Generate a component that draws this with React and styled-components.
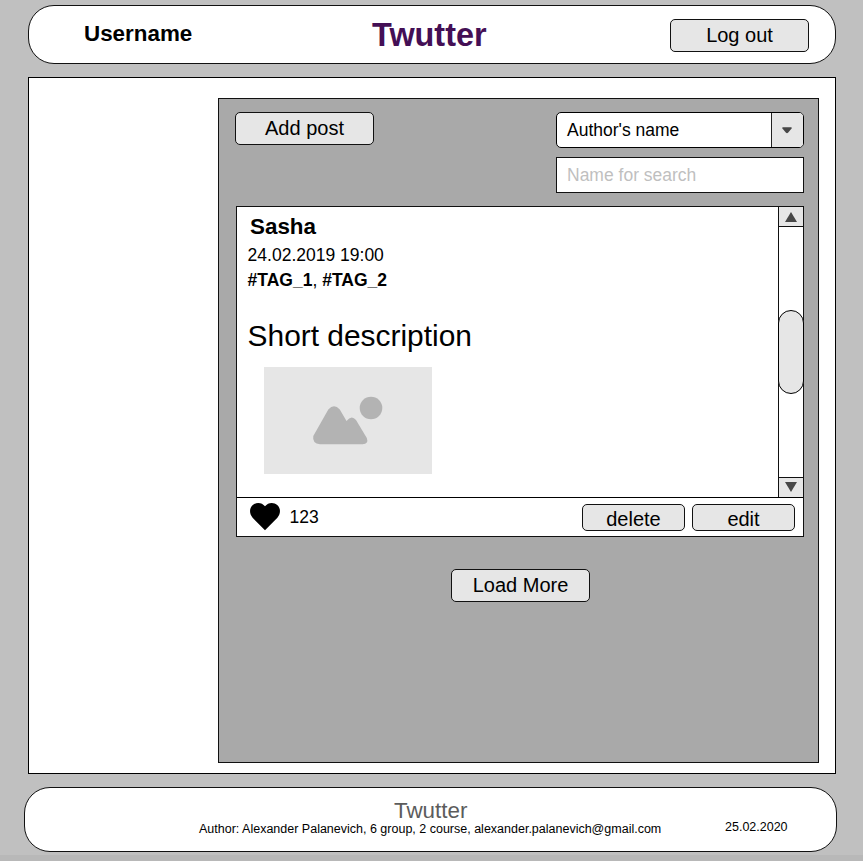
import React from "react";
import styled, { createGlobalStyle } from "styled-components";

const GlobalStyle = createGlobalStyle`
  *, *::before, *::after { box-sizing: border-box; }
  body {
    margin: 0;
    background: #c0c0c0;
    color: #000;
    font-family: "Liberation Sans", Arial, sans-serif;
    overflow: hidden;
  }
  button, input { font-family: inherit; color: inherit; margin: 0; }
`;

const Page = styled.div`
  height: 861px;
  padding: 5px 26px 0 24px;
  display: flex;
  flex-direction: column;
  border-bottom: 6px solid #b8b8b8;
`;

const Header = styled.header`
  margin: 0 1px 0 4px;
  height: 59px;
  flex: none;
  display: grid;
  grid-template-columns: 343px 298px 139px;
  border: 1px solid #111;
  border-radius: 26px;
  background: #fff;
`;

const Username = styled.div`
  padding: 15px 0 0 55px;
  font-size: 22.4px;
  line-height: 26px;
  font-weight: bold;
`;

const Brand = styled.h1`
  margin: 0;
  padding-top: 9px;
  font-size: 32.4px;
  line-height: 40px;
  color: #440f55;
`;

const Button = styled.button`
  width: ${(p) => (p.$small ? 103 : 139)}px;
  height: ${(p) => (p.$small ? 27 : p.$tall ? 33 : 32.5)}px;
  flex: none;
  padding: ${(p) => (p.$small ? "2px 0 0" : "0 0 1px")};
  border: 1px solid #111;
  border-radius: 5px;
  background: #e6e6e6;
  font-size: 20px;
  line-height: 24px;
`;

const LogoutSlot = styled.div`
  padding-top: 13px;
`;

const Main = styled.main`
  margin: 13px 1px 0 4px;
  height: 697px;
  flex: none;
  display: flex;
  justify-content: flex-end;
  padding: 20px 16px 0 0;
  border: 1px solid #000;
  background: #fff;
`;

const Panel = styled.section`
  width: 601px;
  height: 665px;
  display: flex;
  flex-direction: column;
  padding: 13px 14px 0 17px;
  border: 1px solid #111;
  background: #a9a9a9;
`;

const Toolbar = styled.div`
  display: flex;
  justify-content: space-between;
  height: 94px;
  margin-left: -1px;
`;

const Filters = styled.div`
  width: 248px;
  display: flex;
  flex-direction: column;
  gap: 9px;
`;

const Select = styled.div`
  height: 36px;
  display: flex;
  border: 1px solid #000;
  border-radius: 5px;
  background: #fff;
  overflow: hidden;
`;

const SelectValue = styled.div`
  flex: 1;
  padding: 0 0 0 10px;
  font-size: 17.5px;
  line-height: 35px;
`;

const SelectArrow = styled.div`
  width: 32px;
  padding-right: 1px;
  border-left: 1px solid #222;
  background: #e6e6e6;
  display: grid;
  place-items: center;
`;

const Search = styled.input`
  height: 36px;
  width: 100%;
  padding: 0 10px;
  border: 1px solid #111;
  border-radius: 0;
  background: #fff;
  font-size: 17.5px;
  &::placeholder { color: #bfbfbf; opacity: 1; }
`;

const Card = styled.article`
  width: 568px;
  height: 331px;
  flex: none;
  display: flex;
  flex-direction: column;
  border: 1px solid #111;
  background: #fff;
`;

const PostBody = styled.div`
  height: 291px;
  flex: none;
  display: flex;
  border-bottom: 1px solid #000;
`;

const PostContent = styled.div`
  flex: 1;
  padding: 7px 0 0 11px;
`;

const Author = styled.div`
  padding-left: 2px;
  font-size: 22.4px;
  line-height: 26px;
  font-weight: bold;
`;

const Meta = styled.div`
  font-size: 17.5px;
  line-height: 20px;
  margin-top: ${(p) => p.$gap}px;
  margin-left: -0.4px;
`;

const Description = styled.div`
  margin: 28px 0 0 -0.4px;
  font-size: 29.9px;
  line-height: 36px;
`;

const Thumbnail = styled.div`
  width: 167.5px;
  height: 107px;
  margin: 13px 0 0 16px;
  background: #e6e6e6;
  svg { display: block; }
`;

const Scrollbar = styled.div`
  width: 26px;
  margin-right: -1px;
  display: flex;
  flex-direction: column;
  border: solid #111;
  border-width: 0 1px;
`;

const ScrollButton = styled.div`
  height: 20px;
  flex: none;
  display: grid;
  place-items: center;
  background: #e6e6e6;
  border: 0 solid #111;
  border-width: ${(p) => (p.$down ? "1px 0 0" : "0 0 1px")};
  svg { margin: ${(p) => (p.$down ? "0 1px 2px 0" : "0 1px 0 0")}; }
`;

const Track = styled.div`
  flex: 1;
  padding-top: 83px;
`;

const Thumb = styled.div`
  height: 84px;
  margin: 0 -1px;
  border: 1px solid #000;
  border-radius: 13px;
  background: #e6e6e6;
`;

const Actions = styled.div`
  flex: 1;
  display: flex;
  align-items: flex-start;
  padding: 6px 8px 0 13px;
`;

const Likes = styled.div`
  flex: 1;
  display: flex;
  gap: 9.5px;
  font-size: 17.5px;
  line-height: 26px;
  svg { flex: none; margin-top: -1px; }
`;

const ButtonPair = styled.div`
  display: flex;
  gap: 7px;
`;

const LoadMore = styled.div`
  margin: 32px 0 0 215px;
`;

const Footer = styled.footer`
  margin-top: 13px;
  width: 813px;
  height: 65px;
  flex: none;
  display: grid;
  grid-template-columns: 700px 112px;
  border: 1px solid #111;
  border-radius: 26px;
  background: #fff;
`;

const Credits = styled.div`
  padding: 10px 0 0 174px;
  font-size: 12.5px;
  line-height: 14px;
  white-space: nowrap;
`;

const FooterBrand = styled.div`
  padding-left: 195px;
  margin-bottom: -2px;
  color: #5c5c5c;
  font-size: 22.4px;
  line-height: 26px;
`;

const FooterDate = styled.div`
  padding-top: 32px;
  font-size: 12.5px;
  line-height: 14px;
`;

export default function App() {
  return (
    <>
      <GlobalStyle />
      <Page>
        <Header>
          <Username>Username</Username>
          <Brand>Twutter</Brand>
          <LogoutSlot><Button $tall>Log out</Button></LogoutSlot>
        </Header>
        <Main>
          <Panel>
            <Toolbar>
              <Button>Add post</Button>
              <Filters>
                <Select>
                  <SelectValue>Author's name</SelectValue>
                  <SelectArrow>
                    <svg width="10" height="7" viewBox="0 0 10 7">
                      <path d="M1 .3H9Q10.4.5 9.4 1.8L6 5.8Q5 6.7 4 5.8L.6 1.8Q-.4.5 1 .3Z" fill="#474747" />
                    </svg>
                  </SelectArrow>
                </Select>
                <Search placeholder="Name for search" />
              </Filters>
            </Toolbar>
            <Card>
              <PostBody>
                <PostContent>
                  <Author>Sasha</Author>
                  <Meta $gap={5}>24.02.2019 19:00</Meta>
                  <Meta $gap={5}><b>#TAG_1</b>, <b>#TAG_2</b></Meta>
                  <Description>Short description</Description>
                  <Thumbnail>
                    <svg width="167" height="107" viewBox="0 0 167 107" fill="#b3b3b3">
                      <circle cx="107" cy="41" r="11.3" />
                      <path d="M64.3 42.5Q70 36 75.800 42.500L82.500 54Q87.500 47.500 92 53L102.800 71Q105 77 98.500 77.200H56Q48 76.500 49.300 69Z" />
                    </svg>
                  </Thumbnail>
                </PostContent>
                <Scrollbar>
                  <ScrollButton>
                    <svg width="12" height="10" viewBox="0 0 12 10"><path d="M6 0L12 10H0Z" fill="#474747" /></svg>
                  </ScrollButton>
                  <Track><Thumb /></Track>
                  <ScrollButton $down>
                    <svg width="12" height="10" viewBox="0 0 12 10"><path d="M0 0H12L6 10Z" fill="#474747" /></svg>
                  </ScrollButton>
                </Scrollbar>
              </PostBody>
              <Actions>
                <Likes>
                  <svg width="30" height="28" viewBox="0 0 30 28">
                    <path d="M15 27.200L2.600 14.800C-1 10.500-.6 5 2.500 2.200C6.500-1.200 12-.5 15 3.300C18-.5 23.500-1.200 27.500 2.200C30.600 5 31 10.500 27.400 14.800Z" />
                  </svg>
                  <span>123</span>
                </Likes>
                <ButtonPair>
                  <Button $small>delete</Button>
                  <Button $small>edit</Button>
                </ButtonPair>
              </Actions>
            </Card>
            <LoadMore><Button $tall>Load More</Button></LoadMore>
          </Panel>
        </Main>
        <Footer>
          <Credits>
            <FooterBrand>Twutter</FooterBrand>
            Author: Alexander Palanevich, 6 group, 2 course, alexander.palanevich@gmail.com
          </Credits>
          <FooterDate>25.02.2020</FooterDate>
        </Footer>
      </Page>
    </>
  );
}
